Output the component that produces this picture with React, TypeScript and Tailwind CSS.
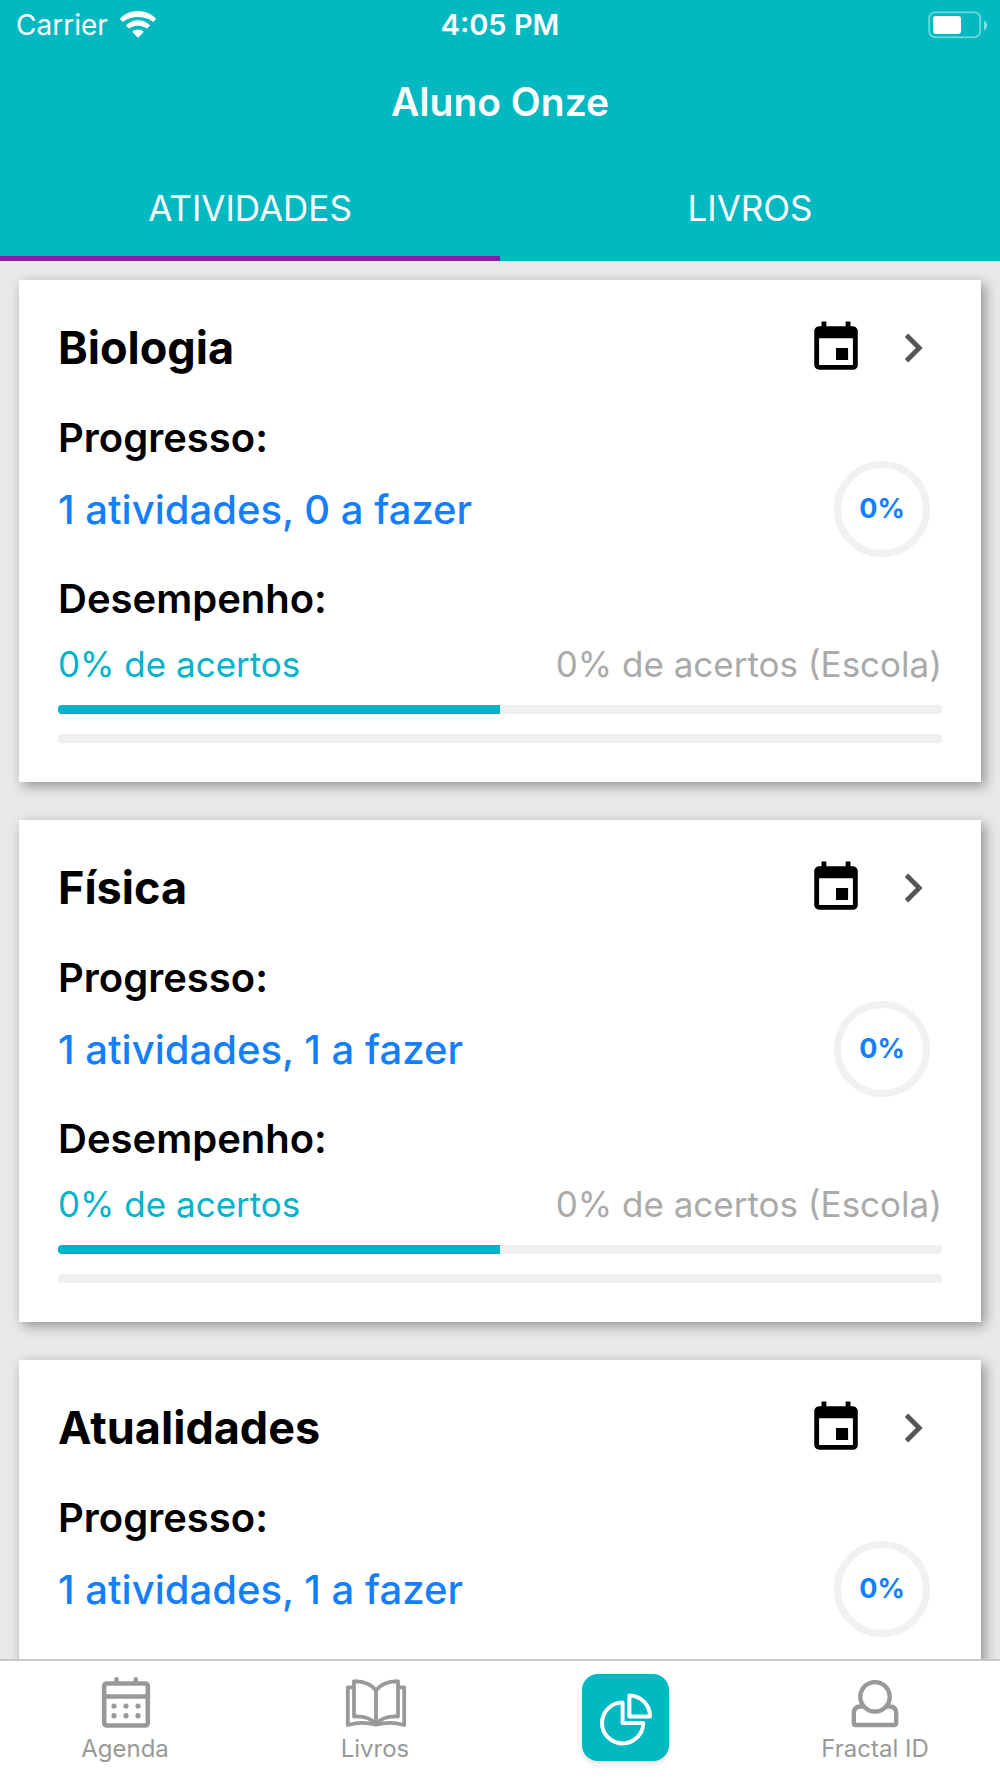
import React, { useState } from 'react';
import { MdChevronRight, MdEvent } from 'react-icons/md';

interface Subject {
  name: string;
  total: number;
  pending: number;
  progress: number;
  score: number;
  schoolScore: number;
}

const SUBJECTS: Subject[] = [
  { name: 'Biologia', total: 1, pending: 0, progress: 0, score: 0, schoolScore: 0 },
  { name: 'Física', total: 1, pending: 1, progress: 0, score: 0, schoolScore: 0 },
  { name: 'Atualidades', total: 1, pending: 1, progress: 0, score: 0, schoolScore: 0 },
];

const TABS = ['ATIVIDADES', 'LIVROS'];

const WifiIcon: React.FC = () => (
  <svg className="w-9 h-7" viewBox="0 0 36 28" fill="currentColor" aria-hidden="true">
    <path d="M18 0C11 0 4.700 2.800 0.200 7.300Q-0.200 7.800 0.200 8.300L2.400 10.500Q2.900 10.900 3.400 10.500C7.200 7.600 12.300 6 18 6S28.800 7.600 32.600 10.500Q33.100 10.900 33.600 10.500L35.800 8.300Q36.200 7.800 35.800 7.300C31.300 2.800 25 0 18 0Z" />
    <path d="M18 9.200C13.400 9.200 9.300 11 6.300 13.900Q5.900 14.400 6.300 14.900L8.700 17.200Q9.200 17.600 9.700 17.200C11.900 15.700 14.800 14.700 18 14.700S24.100 15.700 26.300 17.200Q26.800 17.600 27.300 17.200L29.700 14.900Q30.100 14.400 29.700 13.900C26.700 11 22.600 9.200 18 9.200Z" />
    <path d="M18 18.500C15.900 18.500 14 19.200 12.700 20.300Q12.200 20.800 12.700 21.300L17.400 26.300Q18 26.900 18.600 26.300L23.300 21.300Q23.800 20.800 23.300 20.300C22 19.200 20.100 18.500 18 18.500Z" />
  </svg>
);

const BatteryIcon: React.FC = () => (
  <svg className="w-15 h-7" viewBox="0 0 60 28" fill="none" aria-hidden="true">
    <rect x="1.200" y="1.300" width="51" height="25" rx="6" stroke="white" strokeOpacity="0.4" strokeWidth="2" />
    <rect x="5" y="5" width="28" height="18" rx="3" fill="white" />
    <path d="M56 9.500C58 10.500 59.200 12 59.200 14S58 18.500 56 19.500Z" fill="white" fillOpacity="0.5" />
  </svg>
);

const AgendaIcon: React.FC = () => (
  <svg className="w-15 h-13" viewBox="-1 0 60 52" fill="none" stroke="currentColor" aria-hidden="true">
    <rect x="8.200" y="7.500" width="43.600" height="42" rx="2.500" strokeWidth="4.600" />
    <path d="M8 20.500H52" strokeWidth="4.600" />
    <path d="M20.500 6V3.200M39.800 6V3.200" strokeWidth="4.400" strokeLinecap="round" />
    <g fill="currentColor" stroke="none">
      <circle cx="18" cy="30" r="2.600" />
      <circle cx="30" cy="30" r="2.600" />
      <circle cx="42" cy="30" r="2.600" />
      <circle cx="18" cy="39.700" r="2.600" />
      <circle cx="30" cy="39.700" r="2.600" />
      <circle cx="42" cy="39.700" r="2.600" />
    </g>
  </svg>
);

const BookIcon: React.FC = () => (
  <svg className="w-15 h-13 overflow-visible" viewBox="-1 0 60 52" fill="none" stroke="currentColor" strokeWidth="3.800" strokeLinejoin="round" aria-hidden="true">
    <path d="M30 15C26.500 9 18 4.900 8 5.300V40.500C17.500 40 26 43 30 48.300C34 43 42.500 40 52 40.500V5.300C42 4.900 33.500 9 30 15Z" />
    <path d="M30 15V48.300" />
    <path d="M8 11.300H1.800V49C11 46.500 21 46.300 30 48.700C39 46.300 49 46.500 58.200 49V11.300H52" />
  </svg>
);

const PieIcon: React.FC = () => (
  <svg className="w-13 h-13 overflow-visible" viewBox="-1 -1 52 52" fill="none" stroke="currentColor" strokeWidth="4" strokeLinejoin="round" aria-hidden="true">
    <path d="M22.600 9.600V30H43.200A20.600 20.400 0 1 1 22.600 9.600Z" />
    <path d="M29.400 2.500V23.500H50A20.600 21 0 0 0 29.400 2.500Z" />
  </svg>
);

const PersonIcon: React.FC = () => (
  <svg className="w-15 h-13" viewBox="0 0 60 52" fill="none" stroke="currentColor" strokeWidth="4.400" aria-hidden="true">
    <circle cx="30" cy="20.800" r="14.700" />
    <path d="M18 30.500H15.500Q8.800 30.500 8.800 37.300V47Q8.800 49 10.800 49H49.200Q51.200 49 51.200 47V37.300Q51.200 30.500 44.500 30.500H42" strokeLinejoin="round" />
  </svg>
);

const StatusBar: React.FC = () => (
  <div className="grid grid-cols-3 items-center h-[50px] px-3 leading-8">
    <div className="flex items-center gap-3 pl-1 text-[28px]">
      <span>Carrier</span>
      <WifiIcon />
    </div>
    <span className="text-center text-[29px] font-semibold">4:05 PM</span>
    <div className="flex justify-end">
      <BatteryIcon />
    </div>
  </div>
);

const ScoreBar: React.FC<{ value: number; label: string }> = ({ value, label }) => (
  <div
    role="progressbar"
    aria-label={label}
    aria-valuenow={value}
    className="h-[9px] rounded-sm bg-[#efefef] overflow-hidden"
  >
    <div className="h-full bg-[#00b3cc]" style={{ width: `${value}%` }} />
  </div>
);

const SubjectCard: React.FC<{ subject: Subject }> = ({ subject }) => (
  <article className="bg-white p-[39px] shadow-[4px_4px_12px_rgba(0,0,0,0.38)]">
    <div className="flex items-center justify-between h-[58px]">
      <h2 className="text-[45px] leading-[56px] font-bold">{subject.name}</h2>
      <div className="flex items-center gap-[19px]">
        <button type="button" aria-label="Calendário">
          <MdEvent size={58} />
        </button>
        <button type="button" aria-label="Abrir" className="text-[#555]">
          <MdChevronRight size={58} />
        </button>
      </div>
    </div>

    <h3 className="mt-[38px] text-[40px] leading-[46px] font-semibold">Progresso:</h3>
    <div className="flex items-center justify-between pr-3">
      <p className="pt-[2px] text-[40px] leading-[46px] font-medium text-[#147efb]">
        {subject.total} atividades, {subject.pending} a fazer
      </p>
      <div className="w-24 h-24 rounded-full border-7 border-[#f1f1f1] flex items-center justify-center text-[27px] font-bold text-[#147efb]">
        {subject.progress}%
      </div>
    </div>

    <h3 className="mt-[19px] text-[40px] leading-[46px] font-semibold">Desempenho:</h3>
    <div className="mt-6 flex justify-between text-[35px] leading-9">
      <span className="text-[#00b3cc]">{subject.score}% de acertos</span>
      <span className="text-[#aaa]">{subject.schoolScore}% de acertos (Escola)</span>
    </div>
    <div className="mt-[23px] space-y-5">
      <ScoreBar value={50} label="Aluno" />
      <ScoreBar value={0} label="Escola" />
    </div>
  </article>
);

const BottomNav: React.FC = () => (
  <nav className="grid grid-cols-4 h-[119px] border-t-2 border-[#c8c8c8] bg-white text-[24px] leading-7 text-[#999]">
    <a href="#agenda" className="flex flex-col items-center gap-[7px] pt-[15px]">
      <AgendaIcon />
      <span>Agenda</span>
    </a>
    <a href="#livros" className="flex flex-col items-center gap-[7px] pt-[15px]">
      <BookIcon />
      <span>Livros</span>
    </a>
    <a href="#desempenho" aria-label="Desempenho" aria-current="page" className="flex justify-center pt-[13px]">
      <span className="w-[87px] h-[87px] rounded-2xl bg-[#02b8c1] text-white shadow-md flex items-center justify-center">
        <PieIcon />
      </span>
    </a>
    <a href="#fractal-id" className="flex flex-col items-center gap-[7px] pt-[15px]">
      <PersonIcon />
      <span>Fractal ID</span>
    </a>
  </nav>
);

const App: React.FC = () => {
  const [activeTab, setActiveTab] = useState(0);

  return (
    <div className="h-screen flex flex-col bg-[#e9e9e9] text-black font-['Inter',sans-serif]">
      <header className="bg-[#02b8c1] text-white">
        <StatusBar />
        <h1 className="pt-7 pb-[30px] text-center text-[39px] leading-[47px] font-semibold">Aluno Onze</h1>
        <div role="tablist" className="grid grid-cols-2">
          {TABS.map((tab, index) => (
            <button
              key={tab}
              type="button"
              role="tab"
              aria-selected={activeTab === index}
              onClick={() => setActiveTab(index)}
              className={`h-[106px] pt-1 border-b-5 text-[35px] leading-10 ${activeTab === index ? 'border-[#881ba8]' : 'border-transparent'}`}
            >
              {tab}
            </button>
          ))}
        </div>
      </header>

      <main className="flex-1 min-h-0 overflow-y-auto [scrollbar-width:none] px-[19px] py-[19px] space-y-[38px]">
        {SUBJECTS.map(subject => <SubjectCard key={subject.name} subject={subject} />)}
      </main>

      <BottomNav />
    </div>
  );
};

export default App;
